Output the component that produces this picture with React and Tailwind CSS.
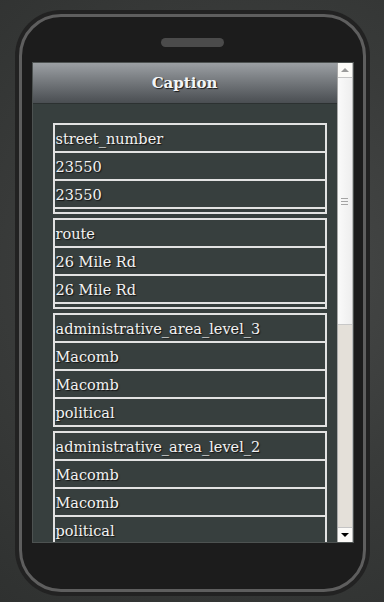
const components = [
  {
    name: "street_number",
    long: "23550",
    short: "23550",
    types: [],
  },
  {
    name: "route",
    long: "26 Mile Rd",
    short: "26 Mile Rd",
    types: [],
  },
  {
    name: "administrative_area_level_3",
    long: "Macomb",
    short: "Macomb",
    types: ["political"],
  },
  {
    name: "administrative_area_level_2",
    long: "Macomb",
    short: "Macomb",
    types: ["political"],
  },
];

function Cell({ children, last }) {
  return (
    <div
      className={
        "h-[26px] leading-[28px] pl-px whitespace-nowrap overflow-hidden box-content " +
        (last ? "" : "border-b-2 border-[#e2e2e2]")
      }
    >
      {children}
    </div>
  );
}

function ComponentTable({ item }) {
  const rows = [item.name, item.long, item.short, ...item.types];
  return (
    <div className="border-2 border-[#e2e2e2] shrink-0">
      {rows.map((r, i) => (
        <Cell key={i} last={item.types.length > 0 && i === rows.length - 1}>
          {r}
        </Cell>
      ))}
      {/* empty types row */}
      {item.types.length === 0 && <div className="h-[3px]"></div>}
    </div>
  );
}

function Scrollbar() {
  return (
    <div className="w-[16px] flex flex-col border-l border-[#a8a8a8] border-r border-r-[#bcbcbc] bg-[#e4e0d9]">
      <div className="h-[15px] bg-[#fbfaf7] border-b border-[#c4c4c4] flex items-center justify-center">
        <div className="w-0 h-0 border-x-[4px] border-x-transparent border-b-[4px] border-b-[#9a9a9a]"></div>
      </div>
      <div className="h-[247px] bg-linear-to-r from-[#fafafa] to-[#eeeeee] border-b border-[#c8c8c8] flex flex-col items-center justify-center gap-[2px] pt-[1px]">
        <div className="w-[7px] h-px bg-[#a4a4a4]"></div>
        <div className="w-[7px] h-px bg-[#a4a4a4]"></div>
        <div className="w-[7px] h-px bg-[#a4a4a4]"></div>
      </div>
      <div className="flex-1"></div>
      <div className="h-[15px] bg-[#fbfaf7] border-t border-[#c4c4c4] flex items-center justify-center">
        <div className="w-0 h-0 border-x-[4px] border-x-transparent border-t-[4px] border-t-black"></div>
      </div>
    </div>
  );
}

export default function App() {
  return (
    <div className="h-[602px] w-full overflow-hidden bg-[radial-gradient(circle_at_65%_45%,#4a4c4b,#393b3a_55%,#2f3130)] flex justify-center pt-[10px] font-['DejaVu_Serif',serif]">
      {/* Phone */}
      <div className="w-[355px] h-[586px] rounded-[46px] bg-[#222222] p-[4px]">
        <div className="h-full rounded-[42px] border-[3px] border-[#5e5e5e] bg-[#1c1c1c] flex flex-col pl-[10px] pr-[9px]">
          {/* Speaker */}
          <div className="mt-[21px] mx-auto w-[63px] h-[9px] rounded-full bg-[#4b4b4b]"></div>

          {/* Screen */}
          <div className="mt-[15px] h-[481px] flex border border-[#4d5251]">
            <div className="flex-1 flex flex-col min-w-0">
              <div className="h-[41px] border-b border-[#2c3131] bg-linear-to-b from-[#9ca0a4] to-[#4a4e52] flex items-center justify-center">
                <span className="text-[15px] font-bold text-[#f4f6f8] [text-shadow:1px_1px_1px_#1a1a1a]">
                  Caption
                </span>
              </div>
              <div className="flex-1 overflow-hidden bg-[#373f3e] pt-[19px] pl-[20px] pr-[10px]">
                <div className="flex flex-col gap-[4px] text-[14.5px] text-[#f2f2f2] [text-shadow:1px_1px_1px_#151515]">
                  {components.map((c, i) => (
                    <ComponentTable key={i} item={c} />
                  ))}
                </div>
              </div>
            </div>
            <Scrollbar />
          </div>
        </div>
      </div>
    </div>
  );
}
